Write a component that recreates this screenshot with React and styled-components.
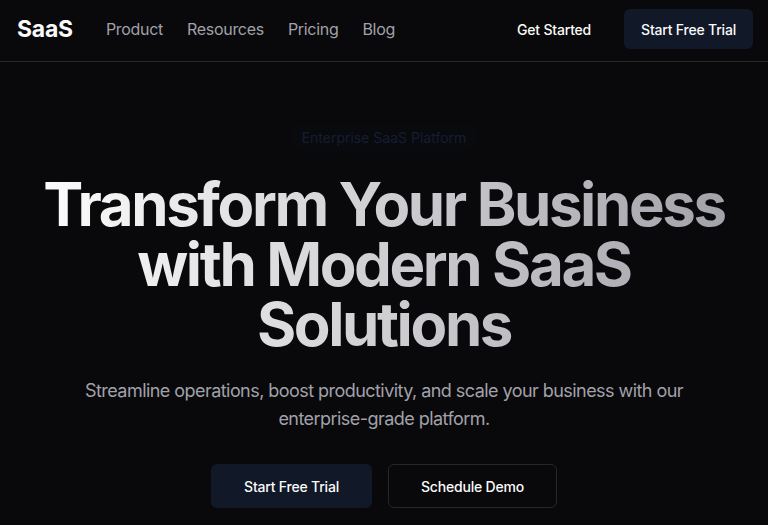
import React from "react";
import styled, { createGlobalStyle } from "styled-components";

const GlobalStyle = createGlobalStyle`
  * { box-sizing: border-box; }
  body {
    margin: 0;
    background: #09090b;
    color: #fafafa;
    font-family: Inter, "Noto Sans", sans-serif;
    -webkit-font-smoothing: antialiased;
  }
`;

const Page = styled.div`
  min-height: 525px;
  background: #09090b;
`;

const Header = styled.header`
  border-bottom: 1px solid #27272a;
  display: flex;
  align-items: center;
  justify-content: space-between;
  padding: 9px 15px 12px 17px;
`;

const Left = styled.div`
  display: flex;
  align-items: center;
  gap: 33px;
`;

const Logo = styled.div`
  font-size: 23px;
  font-weight: 700;
  color: #fafafa;
  letter-spacing: -0.01em;
`;

const Links = styled.nav`
  display: flex;
  gap: 24px;
`;

const NavLink = styled.a`
  font-size: 16px;
  letter-spacing: -0.3px;
  color: #a1a1aa;
  text-decoration: none;
`;

const Right = styled.div`
  display: flex;
  align-items: center;
  gap: 16px;
`;

const Button = styled.button`
  font-family: inherit;
  font-size: 14px;
  font-weight: 500;
  letter-spacing: -0.2px;
  color: #fafafa;
  border-radius: 6px;
  cursor: pointer;
  height: ${p => (p.$size === "lg" ? "44px" : "40px")};
  padding: 0 ${p => (p.$size === "lg" ? "32px" : "16px")};
  background: ${p => (p.$variant === "primary" ? "#111827" : p.$variant === "outline" ? "#09090b" : "transparent")};
  border: 1px solid ${p => (p.$variant === "outline" ? "#27272a" : "transparent")};
`;

const Hero = styled.main`
  display: flex;
  flex-direction: column;
  align-items: center;
  text-align: center;
  padding: 63px 16px 0;
`;

const Badge = styled.div`
  display: inline-block;
  font-size: 14px;
  line-height: 20px;
  padding: 3px 12px;
  border-radius: 999px;
  color: #161d31;
  background: rgba(17, 24, 39, 0.12);
`;

const Title = styled.h1`
  margin: 23px 0 0;
  max-width: 736px;
  font-size: 60px;
  line-height: 60px;
  font-weight: 700;
  letter-spacing: -0.04em;
  background: linear-gradient(to right, #ffffff, #9f9fa6);
  -webkit-background-clip: text;
  background-clip: text;
  color: transparent;
`;

const Subtitle = styled.p`
  margin: 23px 0 0;
  max-width: 672px;
  font-size: 18px;
  line-height: 28px;
  letter-spacing: -0.55px;
  color: #a1a1aa;
`;

const Actions = styled.div`
  display: flex;
  gap: 16px;
  margin-top: 31px;
`;

export default function App() {
  return (
    <Page>
      <GlobalStyle />
      <Header>
        <Left>
          <Logo>SaaS</Logo>
          <Links>
            <NavLink href="#">Product</NavLink>
            <NavLink href="#">Resources</NavLink>
            <NavLink href="#">Pricing</NavLink>
            <NavLink href="#">Blog</NavLink>
          </Links>
        </Left>
        <Right>
          <Button>Get Started</Button>
          <Button $variant="primary">Start Free Trial</Button>
        </Right>
      </Header>
      <Hero>
        <Badge>Enterprise SaaS Platform</Badge>
        <Title>Transform Your Business with Modern SaaS Solutions</Title>
        <Subtitle>
          Streamline operations, boost productivity, and scale your business with our enterprise-grade platform.
        </Subtitle>
        <Actions>
          <Button $variant="primary" $size="lg">Start Free Trial</Button>
          <Button $variant="outline" $size="lg">Schedule Demo</Button>
        </Actions>
      </Hero>
    </Page>
  );
}
